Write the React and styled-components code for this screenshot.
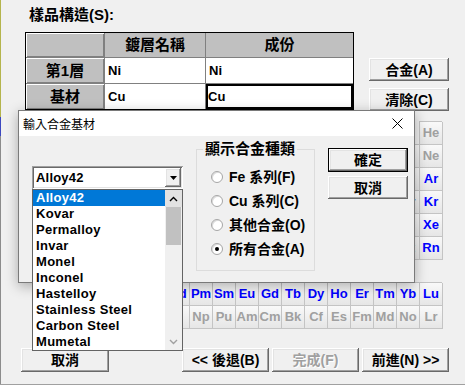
import React from "react";
import styled, { createGlobalStyle, css } from "styled-components";

const sans = `"Liberation Sans", "Noto Sans CJK TC", sans-serif`;

const GlobalStyle = createGlobalStyle`
  html, body {
    margin: 0;
    padding: 0;
    background: #f0f0f0;
  }
  body {
    font-family: ${sans};
  }
  * {
    box-sizing: border-box;
  }
`;

const raised = css`
  background: #f0f0f0;
  box-shadow: inset -1px -1px 0 #696969, inset 1px 1px 0 #ffffff,
    inset -2px -2px 0 #a0a0a0, inset 2px 2px 0 #e3e3e3;
`;

const sunken = css`
  box-shadow: inset 1px 1px 0 #a0a0a0, inset -1px -1px 0 #ffffff,
    inset 2px 2px 0 #696969, inset -2px -2px 0 #e3e3e3;
`;

const Screen = styled.div`
  position: relative;
  display: flex;
  width: 465px;
  height: 385px;
  overflow: hidden;
  background: #f0f0f0;
  border-bottom: 1px solid #a0a0a0;
`;

const EdgeStrip = styled.div`
  flex: none;
  width: 1px;
  background: linear-gradient(
    to bottom,
    #b4b44c 0 117px,
    #3c48c0 117px 136px,
    #8c8c8c 136px
  );
`;

const Wizard = styled.div`
  flex: 1;
  display: flex;
  flex-direction: column;
`;

const Heading = styled.div`
  height: 32px;
  padding: 6px 0 0 28px;
  font: bold 15px/18px ${sans};
  color: #000;
`;

const LayerArea = styled.div`
  display: flex;
  align-items: flex-start;
  height: 79px;
  padding-left: 24px;
`;

const LayerTable = styled.div`
  display: grid;
  grid-template-columns: 78px 100px 147px;
  grid-template-rows: 24px 25px 25px;
  gap: 1px;
  width: 329px;
  border: 1px solid #000;
  background: #808080;
`;

const HeadCell = styled.div`
  display: flex;
  align-items: center;
  justify-content: center;
  background: #c0c0c0;
  font: bold 15px/16px ${sans};
  color: #000;
  ${p =>
    p.$bevel &&
    css`
      box-shadow: inset 1px 1px 0 #ffffff, inset -1px -1px 0 #808080;
    `}
`;

const DataCell = styled.div`
  display: flex;
  align-items: center;
  padding-left: 3px;
  background: #fff;
  font: bold 13px/16px ${sans};
  color: #000;
  ${p =>
    p.$focus &&
    css`
      box-shadow: inset 0 0 0 2px #000;
      padding-left: 2px;
    `}
`;

const SideButtons = styled.div`
  display: flex;
  flex-direction: column;
  gap: 7px;
  margin-left: 15px;
  padding-top: 26px;
`;

const PushButton = styled.button`
  ${raised};
  display: flex;
  align-items: center;
  justify-content: center;
  width: ${p => p.$w || 80}px;
  height: ${p => p.$h || 23}px;
  padding: 0;
  border: none;
  font: bold 14px/16px ${sans};
  color: ${p => (p.disabled ? "#a0a0a0" : "#000")};
  text-shadow: ${p => (p.disabled ? "1px 1px 0 #fff" : "none")};
  ${p =>
    p.$default &&
    css`
      border: 1px solid #000;
    `}
`;

const Periodic = styled.div`
  display: grid;
  grid-template-columns: repeat(18, 23px);
  grid-template-rows: repeat(9, 23px);
  margin: 11px 0 0 28px;
`;

const ElementCell = styled.div`
  grid-column: ${p => p.$col};
  grid-row: ${p => p.$row};
  border-right: 1px solid #c4c4c4;
  border-bottom: 1px solid #c4c4c4;
  box-shadow: -1px -1px 0 #c4c4c4;
  background: linear-gradient(#f9f9f9, #e6e6e6);
  font: bold 13px/22px ${sans};
  text-align: center;
  color: ${p => (p.$off ? "#a0a0a0" : "#0000ff")};
`;

const NavBar = styled.div`
  display: flex;
  margin-top: 19px;
  padding-left: 20px;
`;

const NavSpacer = styled.div`
  width: 73px;
`;

const NavGroup = styled.div`
  display: flex;
  gap: 3px;
`;

/* dialog */

const Dialog = styled.div`
  position: absolute;
  left: 18px;
  top: 110px;
  width: 397px;
  height: 173px;
  display: flex;
  flex-direction: column;
  border: 1px solid #7a7a7a;
  background: #f0f0f0;
  box-shadow: 0 3px 12px rgba(0, 0, 0, 0.3);
`;

const TitleBar = styled.div`
  display: flex;
  align-items: center;
  justify-content: space-between;
  height: 25px;
  padding: 0 11px 0 4px;
  background: #fff;
  font: 12px/16px "Noto Sans CJK TC", sans-serif;
  color: #000;
`;

const DialogBody = styled.div`
  display: flex;
  align-items: flex-start;
  flex: 1;
  padding-left: 13px;
`;

const ComboWrap = styled.div`
  position: relative;
  flex: none;
  width: 151px;
  height: 23px;
  margin-top: 30px;
`;

const Combo = styled.div`
  ${sunken};
  display: flex;
  align-items: center;
  height: 100%;
  padding: 2px;
  background: #fff;
`;

const ComboText = styled.span`
  flex: 1;
  padding-left: 2px;
  font: bold 13px/16px ${sans};
  letter-spacing: 0.2px;
  color: #000;
`;

const DropButton = styled.div`
  ${raised};
  display: flex;
  align-items: center;
  justify-content: center;
  width: 16px;
  height: 19px;
`;

const ListBox = styled.div`
  position: absolute;
  top: 23px;
  left: 0;
  display: flex;
  width: 151px;
  height: 162px;
  border: 1px solid #646464;
  background: #fff;
  z-index: 2;
`;

const Items = styled.div`
  flex: 1;
  display: flex;
  flex-direction: column;
`;

const Item = styled.div`
  height: 16px;
  padding-left: 3px;
  font: bold 13px/16px ${sans};
  letter-spacing: 0.3px;
  white-space: nowrap;
  color: ${p => (p.$selected ? "#fff" : "#000")};
  background: ${p => (p.$selected ? "#0078d7" : "transparent")};
`;

const ScrollBar = styled.div`
  display: flex;
  flex-direction: column;
  width: 17px;
  background: #f0f0f0;
`;

const ScrollArrow = styled.div`
  display: flex;
  align-items: center;
  justify-content: center;
  height: 17px;
  background: ${p => p.$bg || "#f0f0f0"};
`;

const ScrollThumb = styled.div`
  height: 38px;
  margin: 0 1px;
  background: #c1c1c1;
`;

const ScrollTrack = styled.div`
  flex: 1;
`;

const GroupBox = styled.fieldset`
  flex: none;
  width: 119px;
  height: 130px;
  margin: 5px 0 0 13px;
  padding: 0;
  min-width: 0;
  border: 1px solid #dcdcdc;
`;

const GroupTitle = styled.legend`
  margin-left: 6px;
  padding: 0 2px;
  font: bold 15px/16px ${sans};
  color: #000;
`;

const RadioList = styled.div`
  display: flex;
  flex-direction: column;
  padding: 8px 0 0 14px;
`;

const RadioRow = styled.div`
  display: flex;
  align-items: center;
  gap: 6px;
  height: 24px;
  font: bold 14px/16px ${sans};
  color: #000;
  white-space: nowrap;
`;

const RadioDot = styled.span`
  position: relative;
  flex: none;
  width: 12px;
  height: 12px;
  border-radius: 50%;
  border: 1px solid #a6a6a6;
  background: #fff;
  box-shadow: inset 1px 1px 0 #dcdcdc;
  &::after {
    content: "";
    display: ${p => (p.$on ? "block" : "none")};
    position: absolute;
    left: 3px;
    top: 3px;
    width: 4px;
    height: 4px;
    border-radius: 50%;
    background: #000;
  }
`;

const DialogButtons = styled.div`
  display: flex;
  flex-direction: column;
  gap: 4px;
  margin: 12px 0 0 13px;
`;

const Chevron = ({ up, color = "#000" }) => (
  <svg width="9" height="6" viewBox="0 0 9 6">
    <polyline
      points={up ? "1,5 4.5,1.5 8,5" : "1,1 4.5,4.5 8,1"}
      fill="none"
      stroke={color}
      strokeWidth="1.4"
    />
  </svg>
);

const rows = [
  ["H", ...Array(16).fill(null), "He"],
  ["Li", "Be", ...Array(10).fill(null), "B", "C", "N", "O", "F", "Ne"],
  ["Na", "Mg", ...Array(10).fill(null), "Al", "Si", "P", "S", "Cl", "Ar"],
  "K Ca Sc Ti V Cr Mn Fe Co Ni Cu Zn Ga Ge As Se Br Kr".split(" "),
  "Rb Sr Y Zr Nb Mo Tc Ru Rh Pd Ag Cd In Sn Sb Te I Xe".split(" "),
  "Cs Ba La Hf Ta W Re Os Ir Pt Au Hg Tl Pb Bi Po At Rn".split(" "),
  ["Fr", "Ra", "Ac"],
  [null, null, null, ..."La Ce Pr Nd Pm Sm Eu Gd Tb Dy Ho Er Tm Yb Lu".split(" ")],
  [null, null, null, ..."Ac Th Pa U Np Pu Am Cm Bk Cf Es Fm Md No Lr".split(" ")],
];

const alloys = [
  "Alloy42",
  "Kovar",
  "Permalloy",
  "Invar",
  "Monel",
  "Inconel",
  "Hastelloy",
  "Stainless Steel",
  "Carbon Steel",
  "Mumetal",
];

const families = [
  { label: "Fe 系列(F)" },
  { label: "Cu 系列(C)" },
  { label: "其他合金(O)" },
  { label: "所有合金(A)", on: true },
];

// noble gases He/Ne and the actinide rows are greyed out
const isOff = (sym, r) => (r >= 6 && r !== 7 ? true : sym === "He" || sym === "Ne");

export default function App() {
  return (
    <>
      <GlobalStyle />
      <Screen>
        <EdgeStrip />
        <Wizard>
          <Heading>樣品構造(S):</Heading>
          <LayerArea>
            <LayerTable>
              <HeadCell $bevel />
              <HeadCell>鍍層名稱</HeadCell>
              <HeadCell>成份</HeadCell>
              <HeadCell $bevel>第1層</HeadCell>
              <DataCell>Ni</DataCell>
              <DataCell>Ni</DataCell>
              <HeadCell $bevel>基材</HeadCell>
              <DataCell>Cu</DataCell>
              <DataCell $focus>Cu</DataCell>
            </LayerTable>
            <SideButtons>
              <PushButton>合金(A)</PushButton>
              <PushButton>清除(C)</PushButton>
            </SideButtons>
          </LayerArea>
          <Periodic>
            {rows.map((row, r) =>
              row.map((sym, c) =>
                sym ? (
                  <ElementCell key={`${r}-${c}`} $row={r + 1} $col={c + 1} $off={isOff(sym, r)}>
                    {sym}
                  </ElementCell>
                ) : null
              )
            )}
          </Periodic>
          <NavBar>
            <PushButton $w={88} $h={24}>取消</PushButton>
            <NavSpacer />
            <NavGroup>
              <PushButton $w={87} $h={24}>&lt;&lt; 後退(B)</PushButton>
              <PushButton $w={87} $h={24} disabled>完成(F)</PushButton>
              <PushButton $w={87} $h={24}>前進(N) &gt;&gt;</PushButton>
            </NavGroup>
          </NavBar>
        </Wizard>

        <Dialog>
          <TitleBar>
            <span>輸入合金基材</span>
            <svg width="11" height="11" viewBox="0 0 11 11">
              <path d="M0.5 0.5L10.5 10.5M10.5 0.5L0.5 10.5" stroke="#000" strokeWidth="1" />
            </svg>
          </TitleBar>
          <DialogBody>
            <ComboWrap>
              <Combo>
                <ComboText>Alloy42</ComboText>
                <DropButton>
                  <svg width="7" height="4" viewBox="0 0 7 4">
                    <polygon points="0,0 7,0 3.5,4" fill="#000" />
                  </svg>
                </DropButton>
              </Combo>
              <ListBox>
                <Items>
                  {alloys.map((a, i) => (
                    <Item key={a} $selected={i === 0}>
                      {a}
                    </Item>
                  ))}
                </Items>
                <ScrollBar>
                  <ScrollArrow $bg="#e2e2e2">
                    <Chevron up />
                  </ScrollArrow>
                  <ScrollThumb />
                  <ScrollTrack />
                  <ScrollArrow>
                    <Chevron color="#a0a0a0" />
                  </ScrollArrow>
                </ScrollBar>
              </ListBox>
            </ComboWrap>
            <GroupBox>
              <GroupTitle>顯示合金種類</GroupTitle>
              <RadioList>
                {families.map(f => (
                  <RadioRow key={f.label}>
                    <RadioDot $on={f.on} />
                    {f.label}
                  </RadioRow>
                ))}
              </RadioList>
            </GroupBox>
            <DialogButtons>
              <PushButton $default $h={24}>確定</PushButton>
              <PushButton $h={23}>取消</PushButton>
            </DialogButtons>
          </DialogBody>
        </Dialog>
      </Screen>
    </>
  );
}
